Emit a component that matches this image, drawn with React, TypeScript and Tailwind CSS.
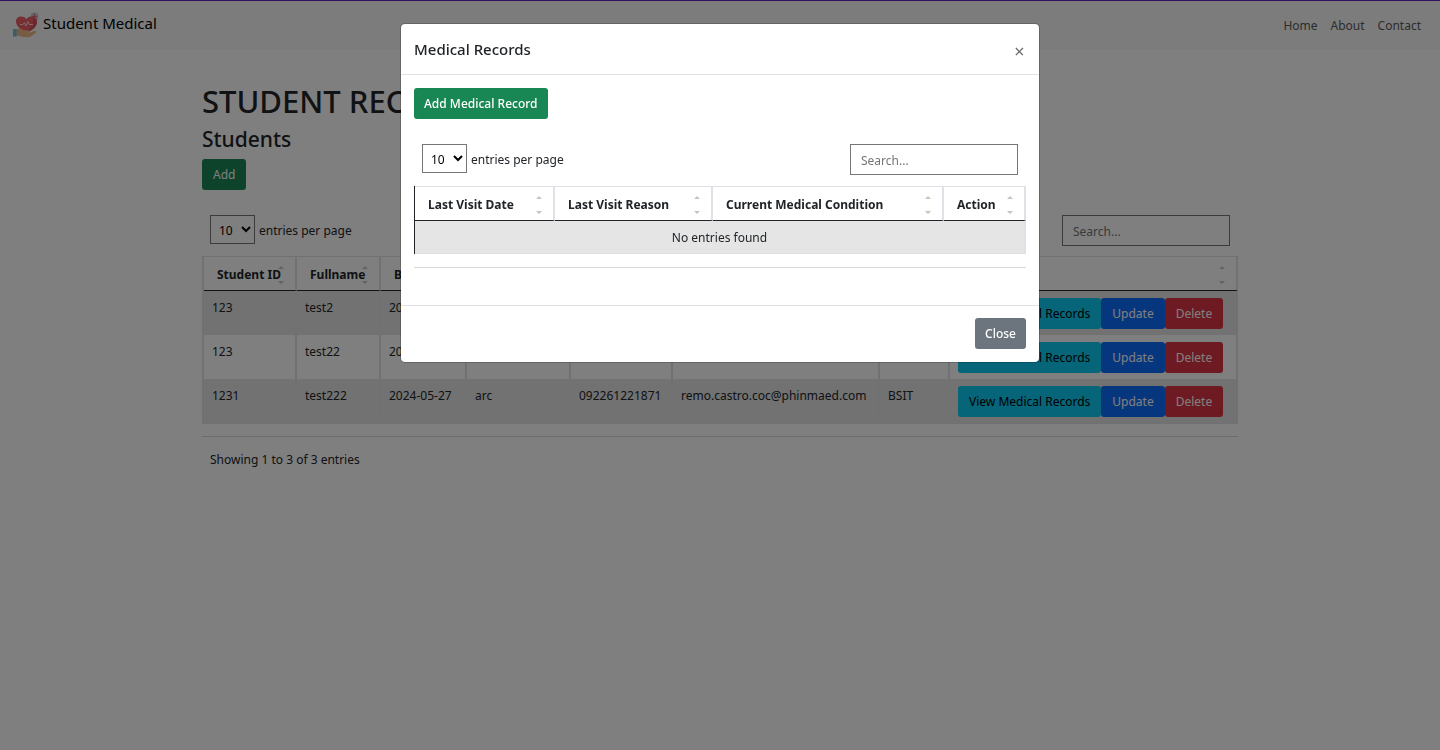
import { ReactNode } from "react";

const students = [
  { id: "123", name: "test2", birth: "2024-05-27", address: "arc", contact: "092261221871", email: "remo.castro.coc@phinmaed.com", course: "BSIT" },
  { id: "123", name: "test22", birth: "2024-05-27", address: "arc", contact: "092261221871", email: "remo.castro.coc@phinmaed.com", course: "BSIT" },
  { id: "1231", name: "test222", birth: "2024-05-27", address: "arc", contact: "092261221871", email: "remo.castro.coc@phinmaed.com", course: "BSIT" },
];

const studentColumns = ["Student ID", "Fullname", "Birthdate", "Address", "Contact", "Email", "Course", "Action"];
const recordColumns = ["Last Visit Date", "Last Visit Reason", "Current Medical Condition", "Action"];

function Logo() {
  return (
    <svg viewBox="0 0 26 26" className="size-[26px]" aria-hidden="true">
      <circle cx="21.5" cy="4.500" r="3.900" fill="#c2c6d6" />
      <path d="M13.500 21C7 17.500 3 13.500 3 9.500 3 6.200 5.300 4.500 8.200 4.500c2.200 0 4.200 1 5.300 2.800C14.600 5.500 16 4.500 18 4.500 21.500 4.500 24 6.800 24 10c0 4-4 8-10.500 11z" fill="#ee5f68" />
      <path d="M20 5c2.500.7 4 2.600 4 5 0 4-4 8-10.500 11l-1.500-1C18 16.500 21 12 20 5z" fill="#d9505c" />
      <path d="M21.500 2.300v4.400M19.300 4.500h4.400" stroke="#e2606c" strokeWidth="1.100" />
      <path d="M7 12.500h3l1.300-2 1.600 3.500 2-4.500 1.300 3H20" fill="none" stroke="#fbd5d6" strokeWidth="1" strokeLinejoin="round" />
      <path d="M3.500 17.500c2.500-1.500 5-1.200 7.500.7h4c1.700 0 1.900 2.300.2 2.500h1l5-1.800c1.600-.6 2.700.9 1.300 2C20 22.800 17.500 25.400 14 25.400c-3.500 0-5.500-1.400-10.500-1.600z" fill="#eeb787" />
      <path d="M0 17h3.800v7.500H0z" fill="#7cb8c8" />
    </svg>
  );
}

function SortArrows() {
  return (
    <svg viewBox="0 0 6 18" className="h-[18px] w-[6px] shrink-0" fill="#c4c4c4" aria-hidden="true">
      <path d="M0 3l3-3 3 3zM0 15h6l-3 3z" />
    </svg>
  );
}

function HeadCell({ children }: { children: ReactNode }) {
  return (
    <th
      scope="col"
      className="h-[35px] border-t border-r-2 border-b border-t-[#dee2e6] border-r-[#dee2e6] border-b-[#212529] p-0 pt-[2px] pl-[13px] text-left font-bold"
    >
      <div className="flex items-center justify-between pr-[11px]">
        <span className="min-w-0 flex-1 whitespace-nowrap">{children}</span>
        <SortArrows />
      </div>
    </th>
  );
}

function Controls({ id }: { id: string }) {
  return (
    <div className="flex items-start justify-between px-2">
      <div className="flex items-center gap-1">
        <select id={id + "-size"} defaultValue="10" className="h-[29px] w-[45px] border border-[#767676] bg-white px-1 pt-[2px] text-black">
          <option>10</option>
          <option>25</option>
        </select>
        <label htmlFor={id + "-size"} className="pt-[2px]">entries per page</label>
      </div>
      <input
        type="search"
        aria-label="Search"
        placeholder="Search..."
        className="h-[31px] w-[168px] border border-[#767676] bg-white px-[10px] pt-[2px] placeholder:text-[#757575]"
      />
    </div>
  );
}

const button = "h-[31px] rounded-[3px] pt-px whitespace-nowrap";

function StudentTable() {
  const cell = "border-r-2 border-[#dee2e6] px-2 pt-[7px] pb-[6px]";
  return (
    <table className="w-full table-fixed border-separate border-spacing-0 border-b border-l-2 border-[#dee2e6]">
      <colgroup>
        <col className="w-[93px]" />
        <col className="w-[84px]" />
        <col className="w-[86px]" />
        <col className="w-[104px]" />
        <col className="w-[102px]" />
        <col className="w-[207px]" />
        <col className="w-[70px]" />
        <col />
      </colgroup>
      <thead>
        <tr>
          {studentColumns.map((c) => (
            <HeadCell key={c}>{c}</HeadCell>
          ))}
        </tr>
      </thead>
      <tbody className="align-top">
        {students.map((s, i) => (
          <tr key={i} className="odd:bg-[#e5e5e5]">
            <td className={cell}>{s.id}</td>
            <td className={cell}>{s.name}</td>
            <td className={cell}>{s.birth}</td>
            <td className={cell}>{s.address}</td>
            <td className={cell}>{s.contact}</td>
            <td className={cell}>{s.email}</td>
            <td className={cell}>{s.course}</td>
            <td className={cell}>
              <div className="flex">
                <button className={button + " bg-[#0dcaf0] px-[11px] text-black"}>View Medical Records</button>
                <button className={button + " bg-[#0d6efd] px-[11px] text-white"}>Update</button>
                <button className={button + " bg-[#dc3545] px-[11px] text-white"}>Delete</button>
              </div>
            </td>
          </tr>
        ))}
      </tbody>
    </table>
  );
}

function RecordsDialog() {
  return (
    <div className="fixed inset-0 bg-black/50 px-4 pt-[23px]">
      <div role="dialog" aria-modal="true" aria-labelledby="records-title" className="mx-auto max-w-[640px] rounded-[5px] border border-black/20 bg-white bg-clip-padding">
        <header className="flex h-[51px] items-center justify-between border-b border-[#dee2e6] px-[13px]">
          <h2 id="records-title" className="text-[15px] font-medium">Medical Records</h2>
          <button aria-label="Close dialog" className="w-[13px] pt-1 text-[18px] leading-5 text-[#6b6b6b]">×</button>
        </header>
        <div className="px-[13px] pt-[13px] pb-[37px]">
          <button className={button + " bg-[#198754] px-[10px] font-medium text-white"}>Add Medical Record</button>
          <div className="pt-[25px] pb-[11px]">
            <Controls id="records" />
          </div>
          <table className="w-full table-fixed border-separate border-spacing-0 border-l border-[#212529]">
            <colgroup>
              <col className="w-[140px]" />
              <col className="w-[158px]" />
              <col className="w-[231px]" />
              <col />
            </colgroup>
            <thead>
              <tr>
                {recordColumns.map((c) => (
                  <HeadCell key={c}>{c}</HeadCell>
                ))}
              </tr>
            </thead>
            <tbody>
              <tr>
                <td colSpan={4} className="h-[33px] border-r-2 border-b border-[#dee2e6] bg-[#e5e5e5] pt-px text-center">No entries found</td>
              </tr>
            </tbody>
          </table>
          <hr className="mt-[13px] border-[#d9d9d9]" />
        </div>
        <footer className="flex justify-end border-t border-[#dee2e6] px-[13px] pt-3 pb-[13px]">
          <button className={button + " bg-[#6c757d] px-[10px] font-medium text-white"}>Close</button>
        </footer>
      </div>
    </div>
  );
}

export default function App() {
  return (
    <div className="min-h-screen bg-white font-['Noto_Sans',sans-serif] text-[12px] leading-5 text-[#212529]">
      <nav className="flex h-[49px] items-center justify-between border-t border-[#6020c0] bg-[#f8f9fa] pr-[19px] pl-[13px]">
        <a href="#" className="flex items-center gap-1 text-[15px] text-black">
          <Logo />
          <span className="pb-1">Student Medical</span>
        </a>
        <div className="flex gap-[13px] pt-[2px] text-[#595a5b]">
          <a href="#home">Home</a>
          <a href="#about">About</a>
          <a href="#contact">Contact</a>
        </div>
      </nav>
      <main className="mx-auto max-w-[1056px] px-[10px] pt-[33px]">
        <h1 className="text-[31px] leading-[38px] font-medium">STUDENT RECORDS</h1>
        <h2 className="mt-[6px] text-[21px] leading-[26px] font-medium">Students</h2>
        <button className={button + " mt-[7px] bg-[#198754] px-[11px] text-white"}>Add</button>
        <div className="pt-[25px] pb-[10px]">
          <Controls id="students" />
        </div>
        <StudentTable />
        <hr className="mt-3 border-[#d9d9d9]" />
        <p className="px-2 pt-[13px]">Showing 1 to 3 of 3 entries</p>
      </main>
      <RecordsDialog />
    </div>
  );
}
